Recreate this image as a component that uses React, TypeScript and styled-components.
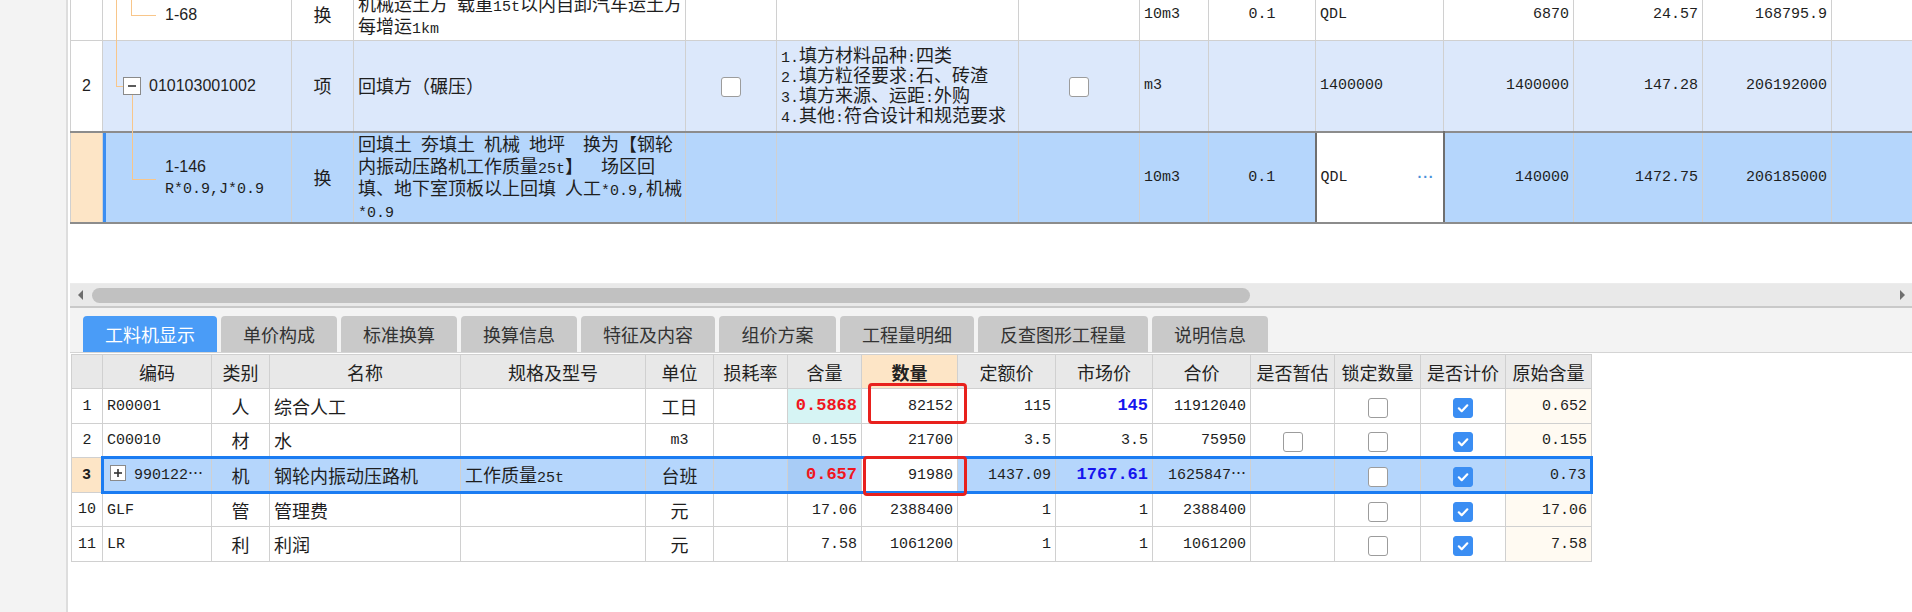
import React from 'react';
import styled, { createGlobalStyle, css } from 'styled-components';

const CJK = `"Noto Sans CJK SC", "Liberation Sans", sans-serif`;
const MONO = `"Liberation Mono", "Noto Sans CJK SC", monospace`;
const SANS = `"Liberation Sans", "Noto Sans CJK SC", sans-serif`;

const PEACH = '#fde5c6';
const ROW_BLUE = '#dce8fb';
const SEL_BLUE = '#b5d6fc';

const GlobalStyle = createGlobalStyle`
  * { box-sizing: border-box; }
  html, body { margin: 0; padding: 0; background: #ffffff; }
  body { font-family: ${CJK}; color: #1e1e1e; }
`;

const Screen = styled.div`
  display: flex;
  width: 1912px;
  height: 612px;
  overflow: hidden;
  background: #fff;
`;

const SidePanel = styled.div`
  flex: none;
  width: 68px;
  background: #f3f3f3;
  border-right: 2px solid #dddddd;
`;

const Workspace = styled.div`
  flex: 1;
  min-width: 0;
  display: flex;
  flex-direction: column;
  padding-left: 2px;
`;

const TopPane = styled.div`
  flex: none;
  height: 283px;
  overflow: hidden;
`;

const Grid = styled.table<{ $width: number }>`
  width: ${(p) => p.$width}px;
  table-layout: fixed;
  border-collapse: collapse;
`;

const TopGrid = styled(Grid)`
  margin-top: -12px;
`;

const Col = styled.col<{ $w: number }>`
  width: ${(p) => p.$w}px;
`;

const Tr = styled.tr<{ $h: number; $bg?: string; $framed?: boolean; $picked?: boolean }>`
  height: ${(p) => p.$h}px;
  background: ${(p) => p.$bg ?? '#fff'};
  ${(p) =>
    p.$framed &&
    css`
      & > td {
        border-top: 2px solid #8c8c8c;
        border-bottom: 2px solid #8c8c8c;
      }
    `}
  ${(p) =>
    p.$picked &&
    css`
      & > td:not(:first-child) {
        border-top: 3px solid #1b7cf2;
        border-bottom: 3px solid #1b7cf2;
      }
      & > td:nth-child(2) {
        border-left: 3px solid #1b7cf2;
      }
      & > td:last-child {
        border-right: 3px solid #1b7cf2;
      }
    `}
`;

type Align = 'left' | 'center' | 'right';

const Td = styled.td<{ $align?: Align; $mono?: boolean; $sans?: boolean; $bg?: string; $bold?: boolean; $lh?: number }>`
  border: 1px solid #d0d0d0;
  padding: 0 4px;
  font-family: ${(p) => (p.$mono ? MONO : p.$sans ? SANS : CJK)};
  font-size: ${(p) => (p.$mono ? 15 : p.$sans ? 16 : 18)}px;
  font-weight: ${(p) => (p.$bold ? 700 : 400)};
  line-height: ${(p) => p.$lh ?? 21}px;
  text-align: ${(p) => p.$align ?? 'left'};
  vertical-align: middle;
  white-space: nowrap;
  overflow: hidden;
  color: #1e1e1e;
  ${(p) => p.$bg && `background: ${p.$bg};`}
`;

const TreeCell = styled(Td)<{ $indent: number }>`
  position: relative;
  padding-left: ${(p) => p.$indent}px;
  overflow: visible;
`;

const MarkedCell = styled(TreeCell)`
  box-shadow: inset 3px 0 0 #3b8ef2;
`;

const EditCell = styled(Td)`
  position: relative;
  background: #fff;
  border: 2px solid #6f6f6f;
`;

const DotsButton = styled.span`
  position: absolute;
  right: 8px;
  top: 50%;
  transform: translateY(-50%);
  font-family: ${SANS};
  font-size: 14px;
  line-height: 1;
  font-weight: 700;
  letter-spacing: 1px;
  color: #4a90d9;
`;

const Stem = styled.i<{ $x: number; $y: number; $h: number }>`
  position: absolute;
  left: ${(p) => p.$x}px;
  top: ${(p) => p.$y}px;
  width: 1px;
  height: ${(p) => p.$h}px;
  background: #f8c68a;
`;

const Branch = styled.i<{ $x: number; $y: number; $w: number }>`
  position: absolute;
  left: ${(p) => p.$x}px;
  top: ${(p) => p.$y}px;
  width: ${(p) => p.$w}px;
  height: 1px;
  background: #f8c68a;
`;

const Toggle = styled.span<{ $size: number }>`
  display: inline-flex;
  align-items: center;
  justify-content: center;
  width: ${(p) => p.$size}px;
  height: ${(p) => p.$size}px;
  border: 1px solid #8a8a8a;
  background: #fff;
  vertical-align: middle;
`;

const TreeToggle = styled(Toggle)`
  position: absolute;
  left: 20px;
  top: 36px;
`;

const RowToggle = styled(Toggle)`
  margin: -3px 8px 0 2px;
`;

const M = styled.span`
  font-family: ${MONO};
  font-size: 15px;
  line-height: 1;
  white-space: pre;
`;

const Figure = styled.span<{ $tone: 'red' | 'blue' }>`
  font-family: ${MONO};
  font-size: 17px;
  line-height: 1;
  font-weight: 700;
  color: ${(p) => (p.$tone === 'red' ? '#f0161e' : '#1515ee')};
`;

const Check = styled.span<{ $on?: boolean }>`
  display: inline-flex;
  align-items: center;
  justify-content: center;
  width: 20px;
  height: 20px;
  border-radius: 3px;
  vertical-align: middle;
  border: 1px solid ${(p) => (p.$on ? '#3b8ef3' : '#9c9c9c')};
  background: ${(p) => (p.$on ? '#3b8ef3' : '#fff')};
`;

const HScroll = styled.div`
  flex: none;
  height: 25px;
  display: flex;
  align-items: center;
  padding: 0 7px 0 8px;
  background: #e9e9e9;
  border-top: 1px solid #ececec;
  border-bottom: 2px solid #c9c9c9;
`;

const ArrowLeft = styled.span`
  width: 0;
  height: 0;
  border-top: 5px solid transparent;
  border-bottom: 5px solid transparent;
  border-right: 5px solid #6e6e6e;
`;

const ArrowRight = styled.span`
  width: 0;
  height: 0;
  margin-left: auto;
  border-top: 5px solid transparent;
  border-bottom: 5px solid transparent;
  border-left: 5px solid #6e6e6e;
`;

const Thumb = styled.div`
  width: 1158px;
  height: 15px;
  margin-left: 9px;
  border-radius: 8px;
  background: #c1c1c1;
`;

const TabStrip = styled.div`
  flex: none;
  height: 45px;
  display: flex;
  align-items: flex-end;
  gap: 4px;
  padding-left: 13px;
  background: #f3f3f3;
  border-bottom: 1px solid #d4d4d4;
`;

const Tab = styled.div<{ $w: number; $active?: boolean }>`
  width: ${(p) => p.$w}px;
  height: 36px;
  display: flex;
  align-items: center;
  justify-content: center;
  border-radius: 4px 4px 0 0;
  font-family: ${CJK};
  font-size: 18px;
  background: ${(p) => (p.$active ? '#4a9cf7' : '#c9c9c9')};
  color: ${(p) => (p.$active ? '#ffffff' : '#333333')};
`;

const LowerPane = styled.div`
  position: relative;
  margin: 1px 0 0 1px;
  width: 1520px;
`;

const Th = styled.th<{ $hot?: boolean }>`
  border: 1px solid #d0d0d0;
  padding: 0 2px;
  height: 34px;
  font-family: ${CJK};
  font-size: 18px;
  font-weight: ${(p) => (p.$hot ? 700 : 400)};
  color: #222;
  white-space: nowrap;
  background: ${(p) => (p.$hot ? PEACH : '#e8e8e8')};
`;

const Callout = styled.div<{ $x: number; $y: number; $w: number; $h: number }>`
  position: absolute;
  left: ${(p) => p.$x}px;
  top: ${(p) => p.$y}px;
  width: ${(p) => p.$w}px;
  height: ${(p) => p.$h}px;
  border: 3px solid #e8211d;
  border-radius: 4px;
  pointer-events: none;
`;

const Tick = () => (
  <svg width="14" height="14" viewBox="0 0 14 14">
    <path d="M2.8 7.3l2.9 2.9L11.3 4.3" fill="none" stroke="#fff" strokeWidth="2.2" strokeLinecap="round" strokeLinejoin="round" />
  </svg>
);

const Sign = ({ plus }: { plus?: boolean }) => (
  <svg width="12" height="12" viewBox="0 0 12 12">
    <path d="M2 6h8" stroke="#333" strokeWidth="1.6" />
    {plus && <path d="M6 2v8" stroke="#333" strokeWidth="1.6" />}
  </svg>
);

const topCols = [32, 189, 62, 332, 91, 242, 121, 69, 107, 128, 130, 129, 129, 81];
const lowerCols = [31, 109, 58, 191, 185, 68, 74, 74, 96, 98, 97, 98, 84, 86, 85, 86];

const tabs = [
  { label: '工料机显示', w: 134 },
  { label: '单价构成', w: 116 },
  { label: '标准换算', w: 116 },
  { label: '换算信息', w: 116 },
  { label: '特征及内容', w: 134 },
  { label: '组价方案', w: 117 },
  { label: '工程量明细', w: 134 },
  { label: '反查图形工程量', w: 170 },
  { label: '说明信息', w: 116 },
];

const headers = ['', '编码', '类别', '名称', '规格及型号', '单位', '损耗率', '含量', '数量', '定额价', '市场价', '合价', '是否暂估', '锁定数量', '是否计价', '原始含量'];

interface ResourceRow {
  no: string;
  code: string;
  kind: string;
  name: string;
  spec?: React.ReactNode;
  unit: string;
  ratio: string;
  qty: string;
  quota: string;
  market: string;
  total: string;
  orig: string;
  h: number;
  estimate?: boolean;
  hotRatio?: boolean;
  hotMarket?: boolean;
  expandable?: boolean;
  current?: boolean;
}

const resources: ResourceRow[] = [
  { no: '1', code: 'R00001', kind: '人', name: '综合人工', unit: '工日', ratio: '0.5868', qty: '82152', quota: '115', market: '145', total: '11912040', orig: '0.652', h: 35, hotRatio: true, hotMarket: true },
  { no: '2', code: 'C00010', kind: '材', name: '水', unit: 'm3', ratio: '0.155', qty: '21700', quota: '3.5', market: '3.5', total: '75950', orig: '0.155', h: 34, estimate: true },
  { no: '3', code: '990122⋯', kind: '机', name: '钢轮内振动压路机', spec: <>工作质量<M>25t</M></>, unit: '台班', ratio: '0.657', qty: '91980', quota: '1437.09', market: '1767.61', total: '1625847⋯', orig: '0.73', h: 35, hotRatio: true, hotMarket: true, expandable: true, current: true },
  { no: '10', code: 'GLF', kind: '管', name: '管理费', unit: '元', ratio: '17.06', qty: '2388400', quota: '1', market: '1', total: '2388400', orig: '17.06', h: 34 },
  { no: '11', code: 'LR', kind: '利', name: '利润', unit: '元', ratio: '7.58', qty: '1061200', quota: '1', market: '1', total: '1061200', orig: '7.58', h: 35 },
];

const isAscii = (s: string) => /^[\x00-\x7f]+$/.test(s);

const ResourceLine = ({ r }: { r: ResourceRow }) => {
  const rowBg = r.current ? SEL_BLUE : '#fff';
  const ratioBg = r.current ? '#a8ccf6' : r.hotRatio ? '#d6f4f4' : undefined;
  return (
    <Tr $h={r.h} $bg={rowBg} $picked={r.current}>
      <Td $align="center" $mono $bold={r.current} $bg={r.current ? PEACH : '#fff'}>
        {r.no}
      </Td>
      <Td $mono>
        {r.expandable && (
          <RowToggle $size={16}>
            <Sign plus />
          </RowToggle>
        )}
        {r.code}
      </Td>
      <Td $align="center">{r.kind}</Td>
      <Td>{r.name}</Td>
      <Td>{r.spec}</Td>
      <Td $align="center" $mono={isAscii(r.unit)}>
        {r.unit}
      </Td>
      <Td />
      <Td $align="right" $mono $bg={ratioBg}>
        {r.hotRatio ? <Figure $tone="red">{r.ratio}</Figure> : r.ratio}
      </Td>
      <Td $align="right" $mono $bg={r.current ? '#fff' : undefined}>
        {r.qty}
      </Td>
      <Td $align="right" $mono>
        {r.quota}
      </Td>
      <Td $align="right" $mono>
        {r.hotMarket ? <Figure $tone="blue">{r.market}</Figure> : r.market}
      </Td>
      <Td $align="right" $mono>
        {r.total}
      </Td>
      <Td $align="center">{r.estimate && <Check />}</Td>
      <Td $align="center">
        <Check />
      </Td>
      <Td $align="center">
        <Check $on>
          <Tick />
        </Check>
      </Td>
      <Td $align="right" $mono $bg={r.current ? undefined : '#fffaf2'}>
        {r.orig}
      </Td>
    </Tr>
  );
};

export default function App() {
  return (
    <>
      <GlobalStyle />
      <Screen>
        <SidePanel />
        <Workspace>
          <TopPane>
            <TopGrid $width={1842}>
              <colgroup>
                {topCols.map((w, i) => (
                  <Col key={i} $w={w} />
                ))}
              </colgroup>
              <tbody>
                <Tr $h={52}>
                  <Td />
                  <TreeCell $sans $indent={62}>
                    <Stem $x={13} $y={0} $h={54} />
                    <Stem $x={28} $y={0} $h={26} />
                    <Branch $x={28} $y={26} $w={25} />
                    1-68
                  </TreeCell>
                  <Td $align="center">换</Td>
                  <Td>
                    机械运土方<M> </M>载重<M>15t</M>以内自卸汽车运土方
                    <br />
                    每增运<M>1km</M>
                  </Td>
                  <Td />
                  <Td />
                  <Td />
                  <Td $mono>10m3</Td>
                  <Td $mono $align="center">0.1</Td>
                  <Td $mono>QDL</Td>
                  <Td $mono $align="right">6870</Td>
                  <Td $mono $align="right">24.57</Td>
                  <Td $mono $align="right">168795.9</Td>
                  <Td />
                </Tr>
                <Tr $h={91} $bg={ROW_BLUE}>
                  <Td $sans $align="center" $bg="#fff">2</Td>
                  <TreeCell $sans $indent={46}>
                    <Stem $x={13} $y={0} $h={45} />
                    <Branch $x={13} $y={45} $w={7} />
                    <TreeToggle $size={18}>
                      <Sign />
                    </TreeToggle>
                    <Stem $x={29} $y={54} $h={38} />
                    010103001002
                  </TreeCell>
                  <Td $align="center">项</Td>
                  <Td>回填方（碾压）</Td>
                  <Td $align="center">
                    <Check />
                  </Td>
                  <Td $lh={17.5}>
                    <M>1.</M>填方材料品种<M>:</M>四类
                    <br />
                    <M>2.</M>填方粒径要求<M>:</M>石、砖渣
                    <br />
                    <M>3.</M>填方来源、运距<M>:</M>外购
                    <br />
                    <M>4.</M>其他<M>:</M>符合设计和规范要求
                  </Td>
                  <Td $align="center">
                    <Check />
                  </Td>
                  <Td $mono>m3</Td>
                  <Td />
                  <Td $mono>1400000</Td>
                  <Td $mono $align="right">1400000</Td>
                  <Td $mono $align="right">147.28</Td>
                  <Td $mono $align="right">206192000</Td>
                  <Td />
                </Tr>
                <Tr $h={91} $bg={SEL_BLUE} $framed>
                  <Td $bg={PEACH} />
                  <MarkedCell $sans $indent={62}>
                    <Stem $x={29} $y={0} $h={46} />
                    <Branch $x={29} $y={46} $w={24} />
                    1-146
                    <br />
                    <M>R*0.9,J*0.9</M>
                  </MarkedCell>
                  <Td $align="center">换</Td>
                  <Td>
                    回填土<M> </M>夯填土<M> </M>机械<M> </M>地坪<M>  </M>换为【钢轮
                    <br />
                    内振动压路机工作质量<M>25t</M>】<M>  </M>场区回
                    <br />
                    填、地下室顶板以上回填<M> </M>人工<M>*0.9,</M>机械
                    <br />
                    <M>*0.9</M>
                  </Td>
                  <Td />
                  <Td />
                  <Td />
                  <Td $mono>10m3</Td>
                  <Td $mono $align="center">0.1</Td>
                  <EditCell $mono>
                    QDL
                    <DotsButton>···</DotsButton>
                  </EditCell>
                  <Td $mono $align="right">140000</Td>
                  <Td $mono $align="right">1472.75</Td>
                  <Td $mono $align="right">206185000</Td>
                  <Td />
                </Tr>
              </tbody>
            </TopGrid>
          </TopPane>

          <HScroll>
            <ArrowLeft />
            <Thumb />
            <ArrowRight />
          </HScroll>

          <TabStrip>
            {tabs.map((t, i) => (
              <Tab key={t.label} $w={t.w} $active={i === 0}>
                {t.label}
              </Tab>
            ))}
          </TabStrip>

          <LowerPane>
            <Grid $width={1520}>
              <colgroup>
                {lowerCols.map((w, i) => (
                  <Col key={i} $w={w} />
                ))}
              </colgroup>
              <thead>
                <tr>
                  {headers.map((h, i) => (
                    <Th key={i} $hot={h === '数量'}>
                      {h}
                    </Th>
                  ))}
                </tr>
              </thead>
              <tbody>
                {resources.map((r) => (
                  <ResourceLine key={r.no} r={r} />
                ))}
              </tbody>
            </Grid>
            <Callout $x={797} $y={29} $w={99} $h={41} />
            <Callout $x={792} $y={102} $w={104} $h={40} />
          </LowerPane>
        </Workspace>
      </Screen>
    </>
  );
}
